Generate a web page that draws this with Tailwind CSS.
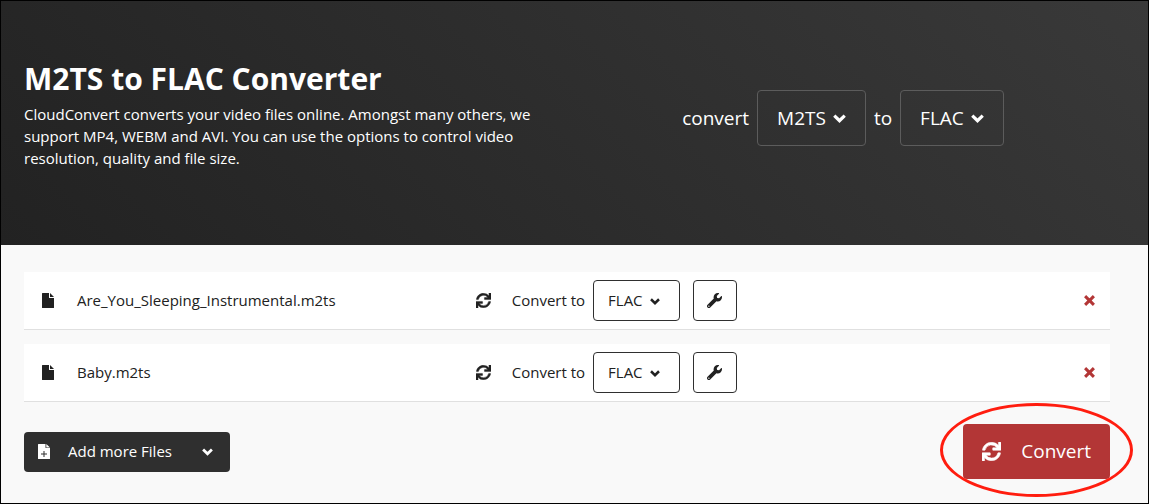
<!DOCTYPE html>
<html lang="en">
<head>
  <meta charset="UTF-8">
  <meta name="viewport" content="width=device-width,initial-scale=1.0">
  <title>M2TS to FLAC Converter</title>
  <script src="https://cdn.jsdelivr.net/npm/@tailwindcss/browser@4"></script>
</head>
<body class="min-h-screen border border-black bg-[#f9f9f9] font-['Open_Sans',sans-serif] text-[15px] text-[#212121]">
  <!-- shared icons -->
  <svg class="hidden">
    <symbol id="sync" viewBox="0 0 512 512"><path stroke="currentColor" stroke-width="14" d="M440.65 12.57l4 82.77A247.16 247.16 0 0 0 255.83 8C134.73 8 33.91 94.92 12.29 209.82A12 12 0 0 0 24.09 224h49.05a12 12 0 0 0 11.67-9.26 175.91 175.91 0 0 1 317-56.94l-101.46-4.86a12 12 0 0 0-12.57 12v47.41a12 12 0 0 0 12 12H500a12 12 0 0 0 12-12V12a12 12 0 0 0-12-12h-47.37a12 12 0 0 0-11.98 12.57zM255.83 432a175.61 175.61 0 0 1-146-77.8l101.8 4.87a12 12 0 0 0 12.57-12v-47.4a12 12 0 0 0-12-12H12a12 12 0 0 0-12 12V500a12 12 0 0 0 12 12h47.35a12 12 0 0 0 12-12.6l-4.15-82.57A247.17 247.17 0 0 0 255.83 504c121.11 0 221.93-86.92 243.55-201.82a12 12 0 0 0-11.8-14.18h-49.05a12 12 0 0 0-11.67 9.26A175.86 175.86 0 0 1 255.83 432z"/></symbol>
    <symbol id="wrench" viewBox="0 0 512 512"><path d="M507.73 109.1c-2.24-9.03-13.54-12.09-20.12-5.51l-74.36 74.36-67.88-11.31-11.31-67.88 74.36-74.36c6.62-6.62 3.43-17.9-5.66-20.16-47.38-11.74-99.55.91-136.58 37.93-39.64 39.64-50.55 97.1-34.05 147.2L18.74 402.76c-24.99 24.99-24.99 65.51 0 90.5 24.99 24.99 65.51 24.99 90.5 0l213.21-213.21c50.12 16.71 107.47 5.68 147.37-34.22 37.07-37.07 49.7-89.32 37.91-136.73zM64 472c-13.25 0-24-10.75-24-24 0-13.26 10.75-24 24-24s24 10.74 24 24c0 13.25-10.75 24-24 24z"/></symbol>
    <symbol id="file" viewBox="0 0 12 15"><path d="M.5 0H7v4.5a.5.5 0 0 0 .5.5H12v9.5a.5.5 0 0 1-.5.5H.5a.5.5 0 0 1-.5-.5V.5A.5.5 0 0 1 .5 0zM8 0l4 4H8z"/></symbol>
    <symbol id="file-plus" viewBox="0 0 12 15"><path fill-rule="evenodd" d="M.5 0H7.500v3.500a.5.5 0 0 0 .5.5H12v10.5a.5.5 0 0 1-.5.5H.5a.5.5 0 0 1-.5-.5V.5A.5.5 0 0 1 .5 0zM8.300 0L12 3.400H8.300zM5.500 7v2.500H3v1h2.500V13h1v-2.500H9v-1H6.500V7z"/></symbol>
    <symbol id="chevron" viewBox="0 0 12 8"><path fill="none" stroke="currentColor" stroke-width="3" d="M1.200 1.300L6 6l4.800-4.700"/></symbol>
    <symbol id="times" viewBox="0 0 10 10"><path fill="none" stroke="currentColor" stroke-width="2.700" d="M1 1l8 8M9 1L1 9"/></symbol>
  </svg>

  <header class="grid grid-cols-2 gap-[18px] bg-linear-45 from-[#222] to-[#393939] pt-[60px] pr-[38px] pb-[76px] pl-[23px] text-white">
    <div>
      <h1 class="text-[30px] leading-[36px] font-bold">M2TS to FLAC Converter</h1>
      <p class="mt-1.5 leading-[22px]">CloudConvert converts your video files online. Amongst many others, we support MP4, WEBM and AVI. You can use the options to control video resolution, quality and file size.</p>
    </div>
    <div class="flex items-center justify-center gap-2 pt-1.5 text-[19px]">
      <label for="from">convert</label>
      <div class="relative">
        <select id="from" class="field-sizing-content h-14 appearance-none rounded-[4px] border border-[#5c5c5c] pr-[39px] pl-[19px]"><option>M2TS</option></select>
        <svg class="pointer-events-none absolute top-6 right-5 h-[9px] w-[13px]"><use href="#chevron"/></svg>
      </div>
      <label for="to">to</label>
      <div class="relative">
        <select id="to" class="field-sizing-content h-14 appearance-none rounded-[4px] border border-[#5c5c5c] pr-[39px] pl-[19px]"><option>FLAC</option></select>
        <svg class="pointer-events-none absolute top-6 right-5 h-[9px] w-[13px]"><use href="#chevron"/></svg>
      </div>
    </div>
  </header>

  <main class="pt-[27px] pr-[38px] pb-6 pl-[23px]">
    <ul class="flex flex-col gap-[14px]">
      <li class="flex h-[58px] items-center border-b border-[#e0e0e0] bg-white pr-[15px] pl-[18px]">
        <div class="mr-0.5 flex w-[41%] items-center gap-[23px]">
          <svg class="h-[15px] w-3" fill="currentColor"><use href="#file"/></svg>
          <span>Are_You_Sleeping_Instrumental.m2ts</span>
        </div>
        <svg class="mr-[21px] size-[15px]" fill="currentColor"><use href="#sync"/></svg>
        <label for="format1" class="mr-2">Convert to</label>
        <div class="relative mr-[13px]">
          <select id="format1" class="field-sizing-content h-[41px] appearance-none rounded-[4px] border border-[#2f2f2f] pr-9 pl-[14px]"><option>FLAC</option></select>
          <svg class="pointer-events-none absolute top-[18px] right-5 h-[7px] w-[10px]"><use href="#chevron"/></svg>
        </div>
        <button aria-label="Options" class="flex h-[41px] w-11 items-center justify-center rounded-[4px] border border-[#2f2f2f]">
          <svg class="size-[15px]" fill="currentColor"><use href="#wrench"/></svg>
        </button>
        <button aria-label="Remove" class="ml-auto text-[#b33636]"><svg class="size-[11px]"><use href="#times"/></svg></button>
      </li>
      <li class="flex h-[58px] items-center border-b border-[#e0e0e0] bg-white pr-[15px] pl-[18px]">
        <div class="mr-0.5 flex w-[41%] items-center gap-[23px]">
          <svg class="h-[15px] w-3" fill="currentColor"><use href="#file"/></svg>
          <span>Baby.m2ts</span>
        </div>
        <svg class="mr-[21px] size-[15px]" fill="currentColor"><use href="#sync"/></svg>
        <label for="format2" class="mr-2">Convert to</label>
        <div class="relative mr-[13px]">
          <select id="format2" class="field-sizing-content h-[41px] appearance-none rounded-[4px] border border-[#2f2f2f] pr-9 pl-[14px]"><option>FLAC</option></select>
          <svg class="pointer-events-none absolute top-[18px] right-5 h-[7px] w-[10px]"><use href="#chevron"/></svg>
        </div>
        <button aria-label="Options" class="flex h-[41px] w-11 items-center justify-center rounded-[4px] border border-[#2f2f2f]">
          <svg class="size-[15px]" fill="currentColor"><use href="#wrench"/></svg>
        </button>
        <button aria-label="Remove" class="ml-auto text-[#b33636]"><svg class="size-[11px]"><use href="#times"/></svg></button>
      </li>
    </ul>

    <div class="mt-[22px] flex items-center justify-between">
      <button class="flex h-10 items-center rounded-[4px] bg-[#2f2f2f] pr-[17px] pl-[14px] text-white">
        <svg class="mr-[18px] h-[15px] w-3" fill="currentColor"><use href="#file-plus"/></svg>
        Add more Files
        <svg class="ml-[30px] h-[8px] w-[11px]"><use href="#chevron"/></svg>
      </button>
      <div class="relative">
        <button class="flex h-[55px] items-center gap-5 rounded-[4px] bg-[#b33636] px-[19px] text-[19px] text-white">
          <svg class="size-[19px]" fill="currentColor"><use href="#sync"/></svg>
          Convert
        </button>
        <!-- highlight around the button -->
        <div class="pointer-events-none absolute -top-[21px] -right-[23px] -bottom-[18px] -left-[23px] rounded-[50%] border-3 border-[#ff1d0f]"></div>
      </div>
    </div>
  </main>
</body>
</html>
